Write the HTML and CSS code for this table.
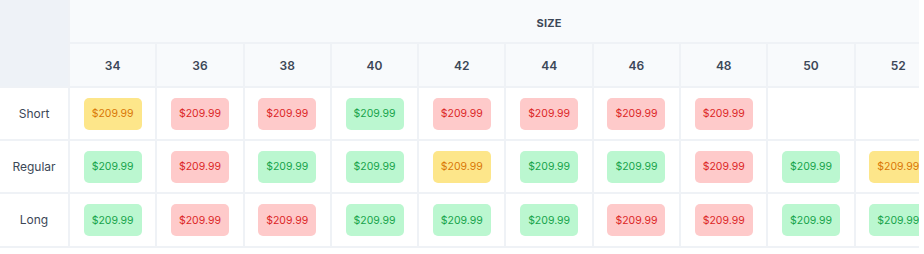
FILE: index.html
```html
<!DOCTYPE html>
<html lang="en">
<head>
<meta charset="utf-8">
<title>Size prices</title>
<link rel="stylesheet" href="styles.css">
</head>
<body>
<div class="viewport">
  <div class="grid">
    <div class="corner"></div>
    <div class="group-head">SIZE</div>

    <div class="col-head">34</div>
    <div class="col-head">36</div>
    <div class="col-head">38</div>
    <div class="col-head">40</div>
    <div class="col-head">42</div>
    <div class="col-head">44</div>
    <div class="col-head">46</div>
    <div class="col-head">48</div>
    <div class="col-head">50</div>
    <div class="col-head">52</div>
    <div class="col-head">54</div>

    <div class="row-head">Short</div>
    <div class="cell"><span class="badge low">$209.99</span></div>
    <div class="cell"><span class="badge out">$209.99</span></div>
    <div class="cell"><span class="badge out">$209.99</span></div>
    <div class="cell"><span class="badge in">$209.99</span></div>
    <div class="cell"><span class="badge out">$209.99</span></div>
    <div class="cell"><span class="badge out">$209.99</span></div>
    <div class="cell"><span class="badge out">$209.99</span></div>
    <div class="cell"><span class="badge out">$209.99</span></div>
    <div class="cell"></div>
    <div class="cell"></div>
    <div class="cell"></div>

    <div class="row-head">Regular</div>
    <div class="cell"><span class="badge in">$209.99</span></div>
    <div class="cell"><span class="badge out">$209.99</span></div>
    <div class="cell"><span class="badge in">$209.99</span></div>
    <div class="cell"><span class="badge in">$209.99</span></div>
    <div class="cell"><span class="badge low">$209.99</span></div>
    <div class="cell"><span class="badge in">$209.99</span></div>
    <div class="cell"><span class="badge in">$209.99</span></div>
    <div class="cell"><span class="badge out">$209.99</span></div>
    <div class="cell"><span class="badge in">$209.99</span></div>
    <div class="cell"><span class="badge low">$209.99</span></div>
    <div class="cell"><span class="badge in">$209.99</span></div>

    <div class="row-head">Long</div>
    <div class="cell"><span class="badge in">$209.99</span></div>
    <div class="cell"><span class="badge out">$209.99</span></div>
    <div class="cell"><span class="badge out">$209.99</span></div>
    <div class="cell"><span class="badge in">$209.99</span></div>
    <div class="cell"><span class="badge in">$209.99</span></div>
    <div class="cell"><span class="badge in">$209.99</span></div>
    <div class="cell"><span class="badge out">$209.99</span></div>
    <div class="cell"><span class="badge out">$209.99</span></div>
    <div class="cell"><span class="badge in">$209.99</span></div>
    <div class="cell"><span class="badge in">$209.99</span></div>
    <div class="cell"><span class="badge in">$209.99</span></div>
  </div>
</div>
</body>
</html>
```

FILE: styles.css
```css
* { box-sizing: border-box; }
html, body { margin: 0; padding: 0; background: #ffffff; }
body { font-family: Inter, "Noto Sans", sans-serif; color: #3c4757; }

.viewport {
  width: 919px;
  overflow: hidden;
}

.grid {
  display: grid;
  width: max-content;
  grid-template-columns: 68px repeat(11, 85.3px);
  grid-template-rows: 42px 42px 51px 51px 52px;
  gap: 2px;
  padding-bottom: 2px;
  background: #eff2f6;
}

.corner {
  grid-row: 1 / span 2;
  background: #eef2f7;
}

.group-head {
  grid-column: 2 / span 11;
  background: #f8fafc;
  display: flex;
  align-items: center;
  justify-content: center;
  padding-top: 3px;
  font-size: 11px;
  font-weight: 700;
  letter-spacing: 0.2px;
  color: #3c4757;
}

.col-head {
  background: #f8fafc;
  display: flex;
  align-items: center;
  justify-content: center;
  font-size: 12px;
  font-weight: 600;
  color: #3c4757;
}

.row-head {
  background: #ffffff;
  display: flex;
  align-items: center;
  justify-content: center;
  padding-bottom: 1px;
  font-size: 12px;
  color: #3c4757;
}

.cell {
  background: #ffffff;
  display: flex;
  align-items: center;
  justify-content: center;
}

.badge {
  width: 58px;
  height: 32px;
  border-radius: 5px;
  display: flex;
  align-items: center;
  justify-content: center;
  font-size: 10.5px;
}

.badge.in { background: #bbf7d0; color: #16a34a; }
.badge.out { background: #fecaca; color: #dc2626; }
.badge.low { background: #fde68a; color: #d97706; }
```
